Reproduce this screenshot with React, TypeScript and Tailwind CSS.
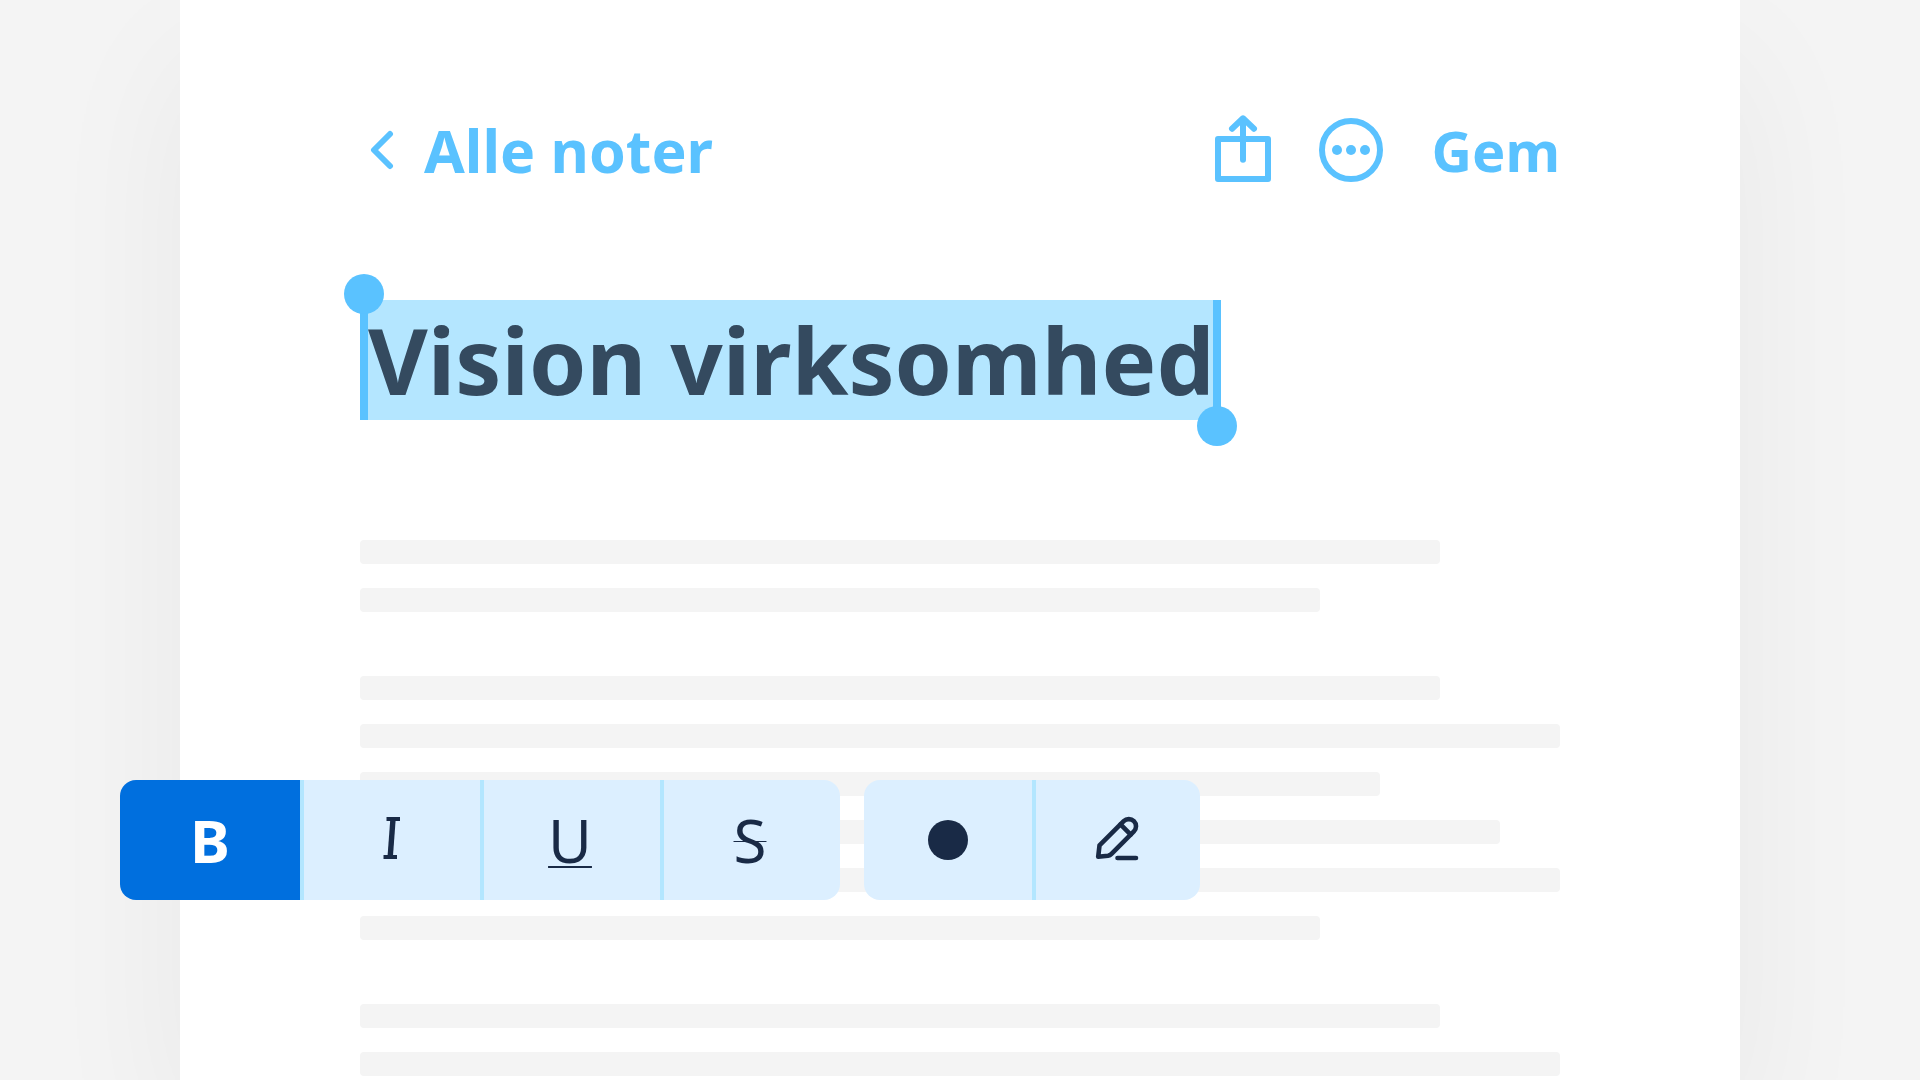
import React from 'react';
import clsx from 'clsx';

interface ToolButtonProps {
  label: string;
  active?: boolean;
  className?: string;
  children: React.ReactNode;
}

const PARAGRAPHS = [
  ['w-[90%]', 'w-[80%]'],
  ['w-[90%]', 'w-full', 'w-[85%]', 'w-[95%]', 'w-full', 'w-[80%]'],
  ['w-[90%]', 'w-full'],
];

const ChevronIcon = () => (
  <svg width="24" height="40" viewBox="0 0 24 40" fill="none" stroke="currentColor" strokeWidth="6" strokeLinecap="round" strokeLinejoin="round" aria-hidden="true">
    <path d="M20 4L4 20l16 16" />
  </svg>
);

const ShareIcon = () => (
  <svg width="56" height="70" viewBox="0 -1 56 70" fill="none" stroke="currentColor" strokeWidth="6" strokeLinecap="round" strokeLinejoin="round" aria-hidden="true">
    <path d="M3 23h50v40H3z" />
    <path d="M28 43.700V2.500M17 12.700L28 2.300l11 10.400" />
  </svg>
);

const MoreIcon = () => (
  <svg width="64" height="64" viewBox="0 0 64 64" aria-hidden="true">
    <circle cx="32" cy="32" r="29" fill="none" stroke="currentColor" strokeWidth="6" />
    <circle cx="18" cy="32" r="5" fill="currentColor" />
    <circle cx="32" cy="32" r="5" fill="currentColor" />
    <circle cx="46" cy="32" r="5" fill="currentColor" />
  </svg>
);

const ItalicIcon = () => (
  <svg width="18" height="42" viewBox="0 0 18 42" fill="none" stroke="currentColor" strokeWidth="4" aria-hidden="true">
    <path d="M3.500 2h13.500M0.500 40H14" />
    <path d="M10 2L7.200 40" strokeWidth="5.400" />
  </svg>
);

const PenIcon = () => (
  <svg width="46" height="46" viewBox="-1 -1 46 46" fill="none" stroke="currentColor" strokeWidth="4.600" strokeLinecap="round" strokeLinejoin="round" aria-hidden="true">
    <path d="M5.500 29.400L29.700 5.200a7.200 7.200 0 0 1 10.200 10.200L17.500 37.800q-1.500 1.500-3.500 1.900l-9.800 1.100z" />
    <path d="M26.500 8.400l10.200 10.200M23.500 42h18.500" />
  </svg>
);

const ToolButton: React.FC<ToolButtonProps> = ({ label, active, className, children }) => (
  <button
    type="button"
    aria-label={label}
    aria-pressed={active}
    className={clsx(
      'flex h-[120px] items-center justify-center',
      active ? 'bg-[#006fde] font-bold text-white' : 'bg-[#dcefff] text-[#192a46]',
      className
    )}
  >
    {children}
  </button>
);

const Toolbar = () => (
  <div role="toolbar" aria-label="Formatering" className="absolute top-[780px] -left-[60px] flex gap-6 text-[60px] leading-[72px]">
    <div className="flex overflow-hidden rounded-2xl">
      <ToolButton label="Fed" active className="w-[180px]">B</ToolButton>
      <ToolButton label="Kursiv" className="w-[180px] border-l-4 border-[#b3e6ff] pb-1">
        <ItalicIcon />
      </ToolButton>
      <ToolButton label="Understreget" className="w-[180px] border-l-4 border-[#b3e6ff] pr-1">
        <span className="underline decoration-2 underline-offset-3 [text-decoration-skip-ink:none]">U</span>
      </ToolButton>
      <ToolButton label="Gennemstreget" className="w-[180px] border-l-4 border-[#b3e6ff] pr-1">
        <span className="line-through decoration-1">S</span>
      </ToolButton>
    </div>
    <div className="flex overflow-hidden rounded-2xl">
      <ToolButton label="Farve" className="w-[168px]">
        <span className="size-10 rounded-full bg-[#192a46]" />
      </ToolButton>
      <ToolButton label="Tegn" className="w-[168px] border-l-4 border-[#b3e6ff] pr-1 pb-1">
        <PenIcon />
      </ToolButton>
    </div>
  </div>
);

const Header = () => (
  <header className="flex h-20 items-center justify-between leading-[78px] font-bold text-[#5ac2ff]">
    <a href="#noter" className="flex items-center gap-[30px] pl-[10px] text-[59px]">
      <ChevronIcon />
      Alle noter
    </a>
    <div className="flex items-center gap-12 text-[56px]">
      <button type="button" aria-label="Del"><ShareIcon /></button>
      <button type="button" aria-label="Mere"><MoreIcon /></button>
      <button type="button">Gem</button>
    </div>
  </header>
);

const SelectedTitle = () => (
  <h1 className="relative flex h-[120px] w-[861px] items-center border-x-8 border-[#5ac2ff] bg-[#b4e6ff] text-[92px] leading-[120px] font-bold whitespace-nowrap text-[#344a5f]">
    Vision virksomhed
    <span className="absolute -top-[26px] -left-6 size-10 rounded-full bg-[#5ac2ff]" />
    <span className="absolute -right-6 -bottom-[26px] size-10 rounded-full bg-[#5ac2ff]" />
  </h1>
);

export default function App() {
  return (
    <div className="min-h-screen overflow-hidden bg-[#f4f4f4] px-[180px] font-['Noto_Sans',sans-serif]">
      <main className="relative min-h-screen bg-white px-[180px] pt-[110px] shadow-[0_60px_140px_rgba(0,0,0,0.05)]">
        <Header />
        <div className="pt-[110px]">
          <SelectedTitle />
        </div>
        <div className="flex flex-col gap-16 pt-[120px]">
          {PARAGRAPHS.map((lines, i) => (
            <div key={i} className="flex flex-col gap-6">
              {lines.map((width, j) => (
                <div key={j} className={clsx('h-6 rounded bg-[#f4f4f4]', width)} />
              ))}
            </div>
          ))}
        </div>
        <Toolbar />
      </main>
    </div>
  );
}
